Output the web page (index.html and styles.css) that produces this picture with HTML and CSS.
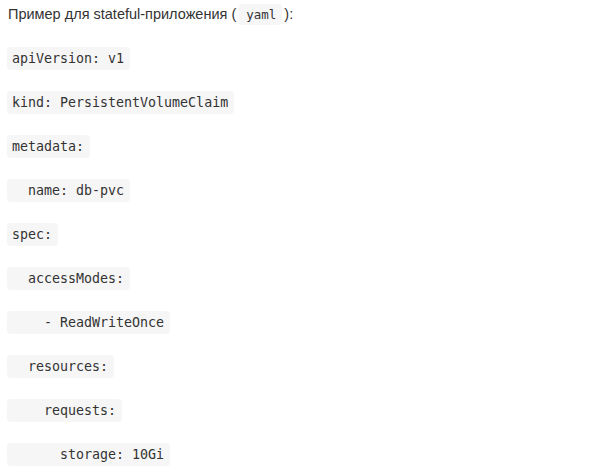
FILE: index.html
```html
<!DOCTYPE html>
<html lang="ru">
<head>
<meta charset="utf-8">
<link rel="stylesheet" href="styles.css">
</head>
<body>
<div class="doc">
  <p class="lead">Пример для stateful-приложения (<code class="inl">yaml</code>):</p>
  <p class="line"><code>apiVersion: v1</code></p>
  <p class="line"><code>kind: PersistentVolumeClaim</code></p>
  <p class="line"><code>metadata:</code></p>
  <p class="line"><code>  name: db-pvc</code></p>
  <p class="line"><code>spec:</code></p>
  <p class="line"><code>  accessModes:</code></p>
  <p class="line"><code>    - ReadWriteOnce</code></p>
  <p class="line"><code>  resources:</code></p>
  <p class="line"><code>    requests:</code></p>
  <p class="line"><code>      storage: 10Gi</code></p>
</div>
</body>
</html>
```
FILE: styles.css
```css
html, body {
  margin: 0;
  padding: 0;
  background: #ffffff;
}
.doc {
  padding: 4px 7px 0 7px;
  display: flex;
  flex-direction: column;
  align-items: flex-start;
}
p {
  margin: 0;
}
.lead {
  font-family: "Liberation Sans", Arial, sans-serif;
  font-size: 14.5px;
  color: #333333;
  line-height: 21px;
  padding-left: 1px;
  margin-bottom: 22px;
}
code {
  font-family: "DejaVu Sans Mono", monospace;
  font-size: 13.3px;
  color: #333333;
  background: #f6f6f6;
  border-radius: 4px;
  white-space: pre;
}
.inl {
  display: inline-block;
  font-size: 12.5px;
  line-height: 21px;
  padding: 0 6px 0 7px;
  margin: 0 2px 0 3px;
}
.line {
  margin-bottom: 21px;
}
.line code {
  display: inline-block;
  height: 23px;
  line-height: 23px;
  padding: 0 6px 0 5px;
}
```
